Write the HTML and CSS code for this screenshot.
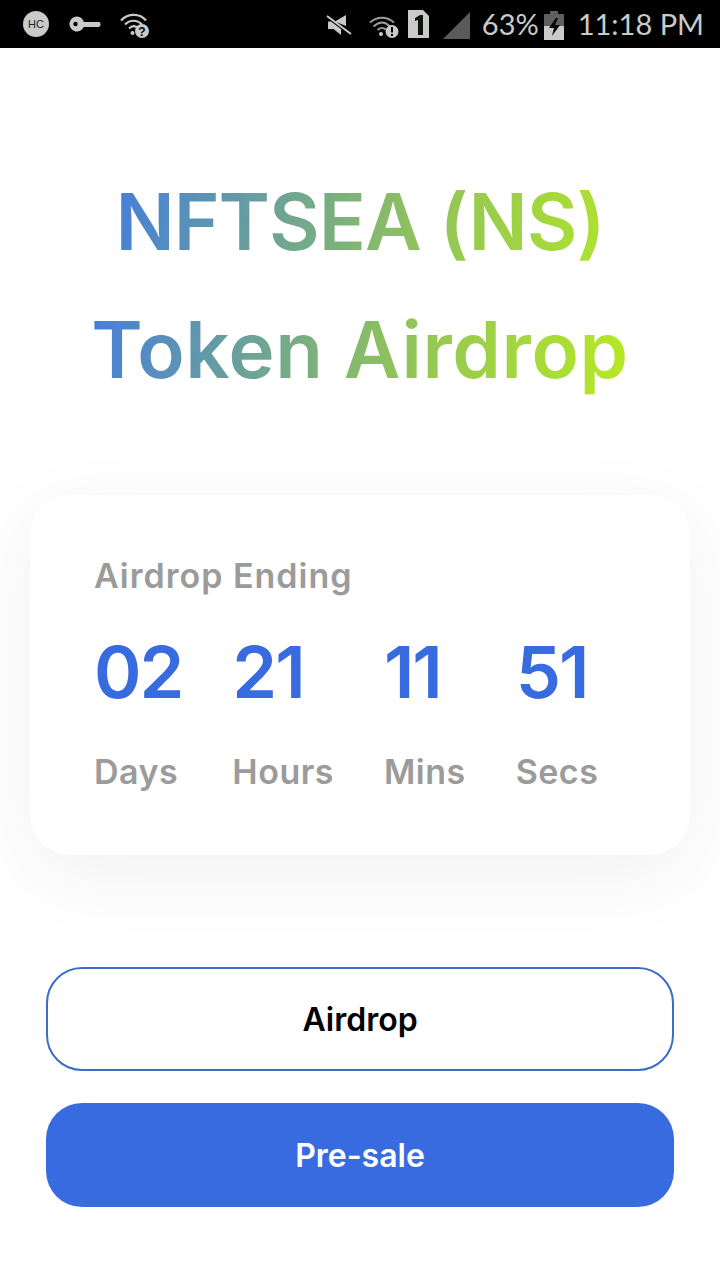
FILE: index.html
```html
<!DOCTYPE html>
<html lang="en">
<head>
    <meta charset="UTF-8">
    <meta name="viewport" content="width=device-width, initial-scale=1.0">
    <title>NFTSEA Token Airdrop</title>
    <link rel="stylesheet" href="styles.css">
</head>
<body>
    <div class="status-bar">
        <div class="status-left">
            <svg class="icon-hc" width="28" height="28" viewBox="0 0 28 28"><circle cx="14" cy="14" r="13" fill="#c9cbc9"/><text x="14" y="18" text-anchor="middle" class="hc-text">HC</text></svg>
            <svg class="icon-key" width="32" height="18" viewBox="0 0 32 18"><path d="M8 1.500a7.500 7.500 0 1 0 6.800 10.500H30l1.500-1.500V8.500L30.500 7h-15.700A7.500 7.500 0 0 0 8 1.500z" fill="#c9cbc9"/><circle cx="6.500" cy="9" r="2.200" fill="#000"/></svg>
            <svg class="icon-wifi" width="30" height="26" viewBox="0 0 30 26">
                <path d="M1 8.500C8 1 20 1 26 8.500M5 12.500C10 7.500 17 7.500 22 12.500M9 16.500C12 13.500 15 13.500 18 16" fill="none" stroke="#c9cbc9" stroke-width="2.200"/>
                <circle cx="12.500" cy="21" r="2" fill="#c9cbc9"/>
                <circle cx="22" cy="19" r="7" fill="#c9cbc9"/>
                <text x="22" y="23.500" text-anchor="middle" class="badge-text">?</text>
            </svg>
        </div>
        <div class="status-right">
            <svg class="icon-mute" width="26" height="22" viewBox="0 0 26 22">
                <path d="M2 6.500V14h5.500L15 20v-6L5 6.500zM9 6.500L20 0v11z" fill="#c9cbc9"/>
                <path d="M1 1L25 19" stroke="#c9cbc9" stroke-width="2"/>
            </svg>
            <svg class="icon-wifi-small" width="30" height="22" viewBox="0 0 30 22">
                <path d="M1 6.500C8 0 18 0 25 6.500M4.500 10.500C10 5.500 16 5.500 21 10.500M8.500 14C12 11 14 11 17 13.500" fill="none" stroke="#9a9c9a" stroke-width="2"/>
                <circle cx="12" cy="18" r="2" fill="#c9cbc9"/>
                <circle cx="23" cy="15.500" r="6.500" fill="#c9cbc9"/>
                <rect x="22" y="11" width="2" height="5.500" fill="#000"/>
                <rect x="22" y="18" width="2" height="2" fill="#000"/>
            </svg>
            <svg class="icon-sim" width="21" height="28" viewBox="0 0 21 28"><path d="M0 0h15l6 6v22H0z" fill="#c9cbc9"/><path d="M7 8l5-3h3v20h-5V10l-3 1z" fill="#111"/></svg>
            <svg class="icon-signal" width="27" height="27" viewBox="0 0 27 27"><path d="M27 0v27H0z" fill="#5a5a5a"/></svg>
            <span class="status-percent">63%</span>
            <svg class="icon-battery" width="20" height="29" viewBox="0 0 20 29">
                <path d="M6 0h8v3h6v12H0V3h6z" fill="#5f5f5f"/>
                <path d="M0 15h20v14H0z" fill="#c9cbc9"/>
                <path d="M12 7L5 17h5l-2 8 8-11h-5l3-7z" fill="#000"/>
            </svg>
            <span class="status-time">11:18 PM</span>
        </div>
    </div>

    <div class="page">
        <h1 class="title"><span class="title-top">NFTSEA (NS)</span><br><span class="title-bottom">Token Airdrop</span></h1>

        <div class="card">
            <div class="card-label">Airdrop Ending</div>
            <div class="countdown">
                <div class="unit">
                    <div class="num">02</div>
                    <div class="unit-label">Days</div>
                </div>
                <div class="unit">
                    <div class="num">21</div>
                    <div class="unit-label">Hours</div>
                </div>
                <div class="unit">
                    <div class="num">11</div>
                    <div class="unit-label">Mins</div>
                </div>
                <div class="unit">
                    <div class="num">51</div>
                    <div class="unit-label">Secs</div>
                </div>
            </div>
        </div>

        <div class="buttons">
            <div class="btn btn-outline">Airdrop</div>
            <div class="btn btn-solid">Pre-sale</div>
        </div>
    </div>
</body>
</html>
```

FILE: styles.css
```css
* {
    box-sizing: border-box;
}
html, body {
    margin: 0;
    padding: 0;
    background-color: #fff;
}
body {
    width: 720px;
    height: 1280px;
    overflow: hidden;
    font-family: "Inter", "Liberation Sans", sans-serif;
}

.status-bar {
    height: 48px;
    background-color: #000;
    color: #c9cbc9;
    display: flex;
    align-items: center;
    justify-content: space-between;
    padding: 0 16px 0 22px;
}
.status-left,
.status-right {
    display: flex;
    align-items: center;
}
.icon-key {
    margin-left: 19px;
}
.icon-wifi {
    margin-left: 19px;
    margin-top: 2px;
}
.icon-wifi-small {
    margin-left: 17px;
    margin-top: 6px;
}
.icon-mute {
    margin-top: 4px;
}
.icon-sim {
    margin-left: 9px;
}
.icon-signal {
    margin-left: 14px;
    margin-top: 2px;
}
.icon-battery {
    margin-left: 5px;
    margin-top: 2px;
}
.hc-text {
    font-family: "Liberation Sans", sans-serif;
    font-size: 11px;
    fill: #222;
}
.badge-text {
    font-family: "Liberation Sans", sans-serif;
    font-size: 12px;
    font-weight: bold;
    fill: #000;
}
.status-percent,
.status-time {
    font-family: "Lato", sans-serif;
    font-weight: 400;
    font-size: 29px;
    line-height: 48px;
}
.status-percent {
    margin-left: 12px;
}
.status-time {
    margin-left: 14px;
}

.page {
    display: flex;
    flex-direction: column;
    align-items: center;
}

.title {
    margin: 110px 0 0;
    width: fit-content;
    font-size: 78px;
    font-weight: 600;
    line-height: 128px;
    text-align: center;
    background-image: linear-gradient(100deg, #3f78e6 0%, #8fc25c 58%, #b8ea22 100%);
    -webkit-background-clip: text;
    background-clip: text;
    color: transparent;
}
.title-top {
    letter-spacing: -1px;
}
.title-bottom {
    letter-spacing: 0.600px;
}

.card {
    width: 660px;
    height: 360px;
    margin-top: 81px;
    padding: 59px 64px 0;
    background-color: #fff;
    border-radius: 40px;
    box-shadow: 0 20px 80px rgba(0, 0, 0, 0.06);
}
.card-label,
.unit-label {
    color: #9b9b9b;
    font-size: 34px;
    font-weight: 600;
    line-height: 44px;
    letter-spacing: 0.500px;
}
.card-label {
    letter-spacing: 1px;
}
.countdown {
    display: flex;
    gap: 50px;
    margin-top: 32px;
}
.num {
    color: #386be0;
    font-size: 72px;
    font-weight: 600;
    line-height: 84px;
    letter-spacing: -2px;
}
.unit-label {
    margin-top: 36px;
}

.buttons {
    width: 628px;
    margin-top: 112px;
    display: flex;
    flex-direction: column;
    gap: 32px;
}
.btn {
    height: 104px;
    border-radius: 36px;
    display: flex;
    align-items: center;
    justify-content: center;
    font-size: 32px;
    font-weight: 600;
}
.btn-outline {
    border: 2px solid #3b6cc8;
    color: #000;
}
.btn-solid {
    background-color: #386be0;
    color: #fff;
}
```
